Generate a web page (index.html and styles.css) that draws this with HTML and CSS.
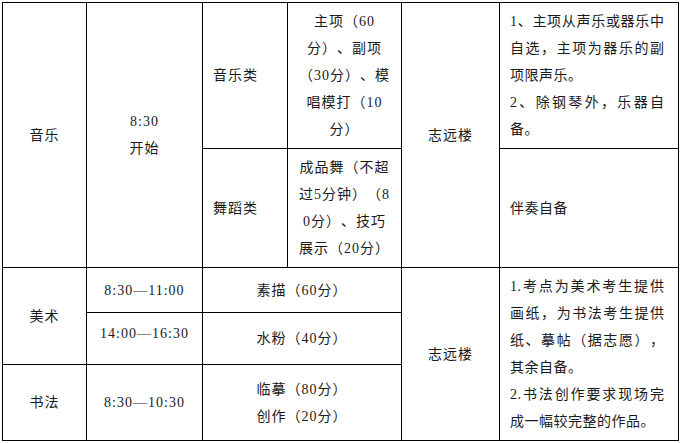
FILE: index.html
```html
<!DOCTYPE html>
<html lang="zh-CN">
<head>
<meta charset="utf-8">
<title>考试安排</title>
<link rel="stylesheet" href="styles.css">
</head>
<body>
<table class="exam">
  <colgroup>
    <col class="c1"><col class="c2"><col class="c3"><col class="c4"><col class="c5"><col class="c6">
  </colgroup>
  <tbody>
    <tr class="r1">
      <td rowspan="2" class="mid">音乐</td>
      <td rowspan="2" class="mid">8:30<br>开始</td>
      <td class="lft">音乐类</td>
      <td class="mid brk">主项（60分）、副项（30分）、模唱模打（10分）</td>
      <td rowspan="2" class="mid">志远楼</td>
      <td class="note">
        <p>1、主项从声乐或器乐中自选，主项为器乐的副项限声乐。</p>
        <p>2、除钢琴外，乐器自备。</p>
      </td>
    </tr>
    <tr class="r2">
      <td class="lft">舞蹈类</td>
      <td class="mid brk">成品舞（不超过5分钟）（80分）、技巧展示（20分）</td>
      <td class="note">伴奏自备</td>
    </tr>
    <tr class="r3">
      <td rowspan="2" class="mid">美术</td>
      <td class="mid">8:30—11:00</td>
      <td colspan="2" class="mid">素描（60分）</td>
      <td rowspan="3" class="mid">志远楼</td>
      <td rowspan="3" class="note">
        <p>1.考点为美术考生提供画纸，为书法考生提供纸、摹帖（据志愿），其余自备。</p>
        <p>2.书法创作要求现场完成一幅较完整的作品。</p>
      </td>
    </tr>
    <tr class="r4">
      <td class="mid raised">14:00—16:30</td>
      <td colspan="2" class="mid">水粉（40分）</td>
    </tr>
    <tr class="r5">
      <td class="mid">书法</td>
      <td class="mid">8:30—10:30</td>
      <td colspan="2" class="mid">临摹（80分）<br>创作（20分）</td>
    </tr>
  </tbody>
</table>
</body>
</html>
```

FILE: styles.css
```css
html, body {
  margin: 0;
  padding: 0;
  background: #fff;
}

body {
  font-family: "Liberation Serif", "Noto Sans CJK SC", serif;
  font-size: 14px;
  color: #1a1a1a;
  text-spacing-trim: space-all;
  text-autospace: no-autospace;
}

.exam {
  border-collapse: collapse;
  table-layout: fixed;
  width: 677px;
  margin: 2px 0 0 2px;
  letter-spacing: 1px;
  line-height: 27px;
}

.c1 { width: 84px; }
.c2 { width: 116px; }
.c3 { width: 85px; }
.c4 { width: 114px; }
.c5 { width: 98px; }
.c6 { width: 179px; }

.r1 { height: 146px; }
.r2 { height: 119px; }
.r3 { height: 45px; }
.r4 { height: 52px; }
.r5 { height: 76px; }

.exam td {
  border: 1px solid #000;
  padding: 0 10px;
  vertical-align: middle;
}

.mid { text-align: center; }
.lft { text-align: left; }

.brk { word-break: break-all; }

.exam td.raised { padding-bottom: 10px; }

.exam td.note {
  padding: 0 13.5px 0 10px;
  text-align: justify;
  letter-spacing: 0.5px;
}

.note p {
  margin: 0;
}
```
